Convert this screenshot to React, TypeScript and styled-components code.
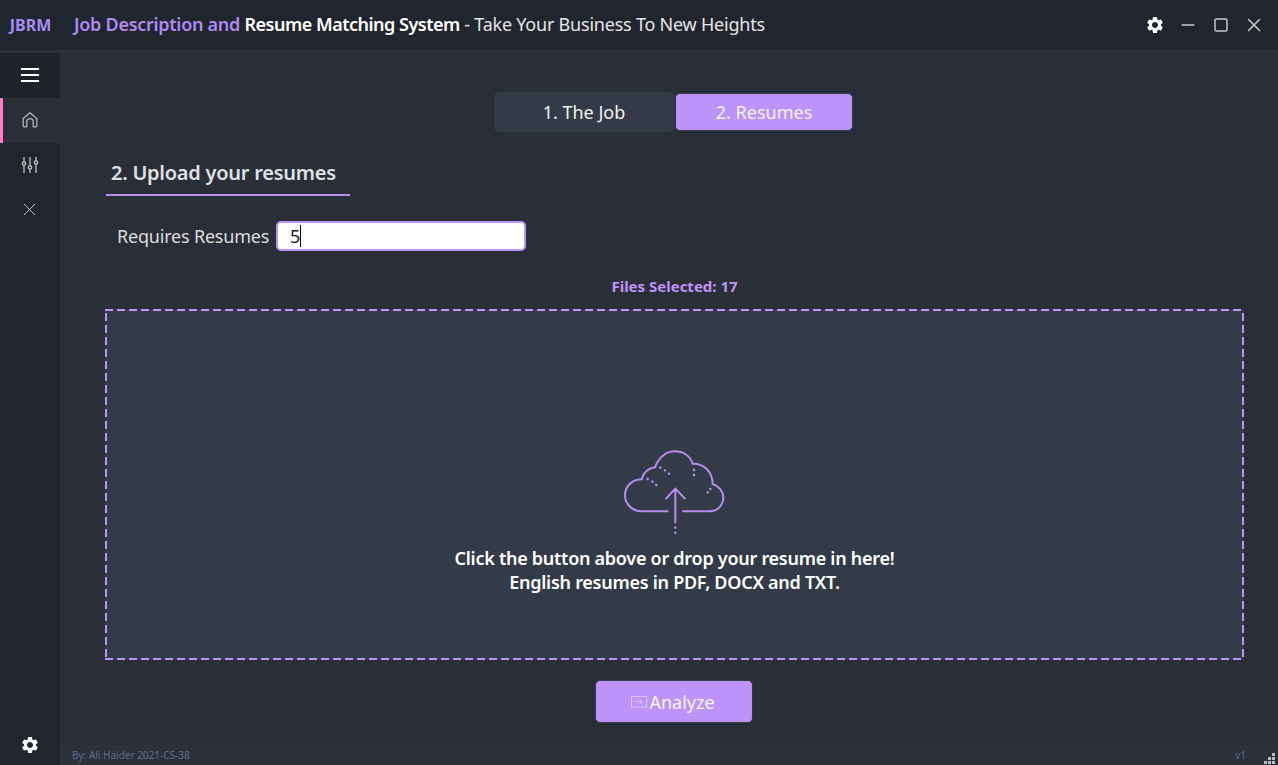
import React from 'react';
import styled, { createGlobalStyle } from 'styled-components';
import { X, Minus, Square } from 'lucide-react';
import { MdSettings } from 'react-icons/md';

const GlobalStyle = createGlobalStyle`
  html, body { margin: 0; padding: 0; height: 100%; }
  body { background: #2a2e37; font-family: "Noto Sans", "Open Sans", sans-serif; overflow: hidden; }
`;

const Window = styled.div`
  width: 1278px;
  height: 765px;
  display: flex;
  flex-direction: column;
  background: #2a2e37;
  color: #dddddd;
`;

const TitleBar = styled.header`
  height: 50px;
  flex: none;
  display: flex;
  align-items: center;
  background: #21252d;
  border-bottom: 3px solid #2c313a;
`;

const Logo = styled.div`
  width: 60px;
  padding-left: 1px;
  box-sizing: border-box;
  text-align: center;
  font-size: 16px;
  font-weight: 700;
  letter-spacing: 0;
  color: #a98bf5;
`;

const Title = styled.div`
  margin: 0 0 2px 14px;
  font-size: 18px;
  letter-spacing: -0.22px;
  white-space: nowrap;
  color: #e6e6e6;
`;

const Accent = styled.span`
  font-weight: 600;
  letter-spacing: -0.28px;
  color: #ac8cf0;
`;

const Strong = styled.span`
  font-weight: 600;
  letter-spacing: -0.5px;
  color: #ffffff;
`;

const WindowButtons = styled.div`
  margin-left: auto;
  margin-right: 8px;
  display: flex;
  align-items: center;
`;

const WindowButton = styled.div<{ $light?: boolean }>`
  width: 33px;
  display: flex;
  justify-content: center;
  color: ${(p) => (p.$light ? '#ffffff' : '#c8c8c8')};
`;

const Body = styled.div`
  flex: 1;
  display: flex;
  min-height: 0;
`;

const Sidebar = styled.nav`
  width: 60px;
  flex: none;
  display: flex;
  flex-direction: column;
  background: #21252d;
`;

const MenuCell = styled.div<{ $active?: boolean; $height: number; $dark?: boolean }>`
  height: ${(p) => p.$height}px;
  flex: none;
  display: flex;
  align-items: center;
  justify-content: center;
  box-sizing: border-box;
  color: #c9c9c9;
  background: ${(p) => (p.$active ? '#2a2e37' : p.$dark ? '#1f2329' : 'transparent')};
  border-left: ${(p) => (p.$active ? '3px solid #ff79c6' : '0')};
  padding-right: ${(p) => (p.$active ? '4px' : '1px')};
  padding-bottom: ${(p) => (p.$active || p.$dark ? '2px' : '0')};
`;

const MenuSpacer = styled.div`
  flex: 1;
`;

const Hamburger = styled.div`
  width: 18px;
  height: 14px;
  border-top: 2px solid #fff;
  border-bottom: 2px solid #fff;
  box-sizing: border-box;
  position: relative;
  &::after {
    content: '';
    position: absolute;
    left: 0;
    right: 0;
    top: 4px;
    height: 2px;
    background: #fff;
  }
`;

const Main = styled.main`
  flex: 1;
  min-width: 0;
  display: flex;
  flex-direction: column;
`;

const Content = styled.div`
  flex: 1;
  display: flex;
  flex-direction: column;
  padding: 39px 34px 0 45px;
`;

const Tabs = styled.div`
  display: flex;
  justify-content: center;
  align-items: center;
  gap: 1px;
  padding-right: 2px;
`;

const Tab = styled.div<{ $selected?: boolean }>`
  box-sizing: border-box;
  display: flex;
  align-items: center;
  justify-content: center;
  width: ${(p) => (p.$selected ? '178px' : '180px')};
  height: ${(p) => (p.$selected ? '38px' : '40px')};
  font-size: 18px;
  border-radius: 5px;
  color: #f2f2f2;
  background: ${(p) => (p.$selected ? '#bd93f9' : '#343b48')};
  border: ${(p) => (p.$selected ? '1px solid #343b48' : '0')};
`;

const Heading = styled.h2`
  box-sizing: border-box;
  width: 244px;
  height: 46px;
  margin: 18px 0 0 1px;
  padding: 9px 0 0 5px;
  font-size: 20px;
  line-height: 27px;
  font-weight: 600;
  letter-spacing: -0.25px;
  color: #dfe1e4;
  border-bottom: 2px solid #b78ff0;
`;

const FormRow = styled.div`
  display: flex;
  align-items: center;
  margin: 25px 0 0 12px;
  gap: 7px;
`;

const FieldLabel = styled.label`
  width: 152px;
  font-size: 18px;
  letter-spacing: -0.2px;
  color: #dddddd;
  white-space: nowrap;
`;

const CountInput = styled.div`
  box-sizing: border-box;
  width: 250px;
  height: 30px;
  display: flex;
  align-items: center;
  padding-left: 12px;
  font-size: 18px;
  color: #222;
  background: #fff;
  border: 2px solid #bd93f9;
  border-radius: 5px;
`;

const Caret = styled.span`
  width: 1px;
  height: 22px;
  background: #000;
`;

const FilesSelected = styled.div`
  margin-top: 25px;
  height: 20px;
  text-align: center;
  font-size: 15px;
  line-height: 20px;
  font-weight: 700;
  color: #bd93f9;
`;

const DropZone = styled.div`
  box-sizing: border-box;
  width: 1139px;
  height: 351px;
  margin-top: 13px;
  padding-top: 121px;
  display: flex;
  flex-direction: column;
  align-items: center;
  background-color: #343b48;
  background-image:
    linear-gradient(90deg, #bd93f9 8px, transparent 8px),
    linear-gradient(90deg, #bd93f9 8px, transparent 8px),
    linear-gradient(0deg, #bd93f9 8px, transparent 8px),
    linear-gradient(0deg, #bd93f9 8px, transparent 8px);
  background-size: 12px 2px, 12px 2px, 2px 12px, 2px 12px;
  background-position: 0 0, 0 100%, 0 0, 100% 0;
  background-repeat: repeat-x, repeat-x, repeat-y, repeat-y;
`;

const CloudIcon = styled.svg`
  width: 150px;
  height: 120px;
  flex: none;
`;

const DropText = styled.div`
  margin-top: -4px;
  text-align: center;
  font-size: 18px;
  line-height: 24px;
  font-weight: 600;
  letter-spacing: -0.27px;
  color: #ffffff;
`;

const AnalyzeButton = styled.button`
  box-sizing: border-box;
  align-self: center;
  width: 158px;
  height: 43px;
  margin: 20px 1px 0 0;
  display: flex;
  align-items: center;
  justify-content: center;
  gap: 2px;
  padding: 0 2px 0 0;
  font-family: inherit;
  font-size: 18px;
  color: #f5f5f5;
  background: #bd93f9;
  border: 1px solid #343b48;
  border-radius: 5px;
`;

const Footer = styled.footer`
  height: 20px;
  flex: none;
  display: flex;
  align-items: center;
  padding: 0 3px 0 12px;
  font-size: 10px;
  color: #5f6d87;
  background: #2c313a;
`;

const Version = styled.span`
  margin-left: auto;
  margin-right: 17px;
`;

const GripGrid = styled.svg`
  width: 12px;
  height: 12px;
  margin-top: 6px;
`;

const HomeIcon = () => (
  <svg width="18" height="18" viewBox="0 0 18 18" fill="none" stroke="#b5b5b5" strokeWidth="1.3" strokeLinejoin="round">
    <path d="M2.2 7.6 9 1.8l6.8 5.8v7.2a1 1 0 0 1-1 1h-2.6v-5a3.2 3.2 0 0 0-6.4 0v5H3.2a1 1 0 0 1-1-1z" />
  </svg>
);

const SlidersIcon = () => (
  <svg width="18" height="18" viewBox="0 0 18 18" fill="none" stroke="#d0d0d0" strokeWidth="1.2">
    <path d="M3 1v4.8M3 9.2V17M9 1v8.8M9 13.2V17M15 1v3.8M15 8.2V17" />
    <circle cx="3" cy="7.5" r="1.7" />
    <circle cx="9" cy="11.5" r="1.7" />
    <circle cx="15" cy="6.5" r="1.7" />
  </svg>
);

const UploadCloud = () => (
  <CloudIcon viewBox="0 0 450 360" fill="none" stroke="#b78ceb" strokeWidth="6">
    <path d="M205 244H125C96 244 75 222 75 196C75 168 98 148 125 148C130 128 146 115 165 112C175 83 198 64 224 64C250 64 270 78 278 101C312 100 338 126 338 162C356 168 370 184 370 202C370 226 352 244 328 244H247" />
    <path d="M226 178V280M197 207 226 176 256 207" />
    <g fill="#b78ceb" stroke="none">
      {[
        [226, 293], [226, 308], [181, 113], [195, 121], [207, 131], [143, 147], [157, 155],
        [169, 165], [282, 120], [282, 135], [331, 177], [323, 187],
      ].map(([x, y]) => (
        <rect key={`${x}-${y}`} x={x - 3.5} y={y - 3.5} width="7" height="7" rx="2" />
      ))}
    </g>
  </CloudIcon>
);

const AnalyzeIcon = () => (
  <svg width="16" height="12" viewBox="0 0 16 12" fill="none" stroke="#dcc6fb" strokeWidth="1">
    <path d="M.5.5h15v10.6H.5zM3 5.8h8M8.5 3.2l2.6 2.6-2.6 2.6" />
  </svg>
);

export default function App() {
  return (
    <Window>
      <GlobalStyle />
      <TitleBar>
        <Logo>JBRM</Logo>
        <Title>
          <Accent>Job Description and </Accent>
          <Strong>Resume Matching System</Strong> - Take Your Business To New Heights
        </Title>
        <WindowButtons>
          <WindowButton $light>
            <MdSettings size={20} />
          </WindowButton>
          <WindowButton>
            <Minus size={20} strokeWidth={2} />
          </WindowButton>
          <WindowButton>
            <Square size={16} strokeWidth={2.2} />
          </WindowButton>
          <WindowButton>
            <X size={22} strokeWidth={1.7} />
          </WindowButton>
        </WindowButtons>
      </TitleBar>
      <Body>
        <Sidebar>
          <MenuCell $height={45} $dark>
            <Hamburger />
          </MenuCell>
          <MenuCell $height={45} $active>
            <HomeIcon />
          </MenuCell>
          <MenuCell $height={44}>
            <SlidersIcon />
          </MenuCell>
          <MenuCell $height={45}>
            <X size={21} strokeWidth={1.1} />
          </MenuCell>
          <MenuSpacer />
          <MenuCell $height={40}>
            <MdSettings size={20} color="#ffffff" />
          </MenuCell>
        </Sidebar>
        <Main>
          <Content>
            <Tabs>
              <Tab>1. The Job</Tab>
              <Tab $selected>2. Resumes</Tab>
            </Tabs>
            <Heading>2. Upload your resumes</Heading>
            <FormRow>
              <FieldLabel>Requires Resumes</FieldLabel>
              <CountInput>
                5<Caret />
              </CountInput>
            </FormRow>
            <FilesSelected>Files Selected: 17</FilesSelected>
            <DropZone>
              <UploadCloud />
              <DropText>
                Click the button above or drop your resume in here!
                <br />
                English resumes in PDF, DOCX and TXT.
              </DropText>
            </DropZone>
            <AnalyzeButton>
              <AnalyzeIcon />
              Analyze
            </AnalyzeButton>
          </Content>
          <Footer>
            By: Ali Haider 2021-CS-38
            <Version>v1</Version>
            <GripGrid viewBox="0 0 12 12" fill="#bdbdbd">
              <rect x="9" y="1" width="3" height="3" />
              <rect x="5" y="5" width="3" height="3" />
              <rect x="9" y="5" width="3" height="3" />
              <rect x="1" y="9" width="3" height="3" />
              <rect x="5" y="9" width="3" height="3" />
              <rect x="9" y="9" width="3" height="3" />
            </GripGrid>
          </Footer>
        </Main>
      </Body>
    </Window>
  );
}
